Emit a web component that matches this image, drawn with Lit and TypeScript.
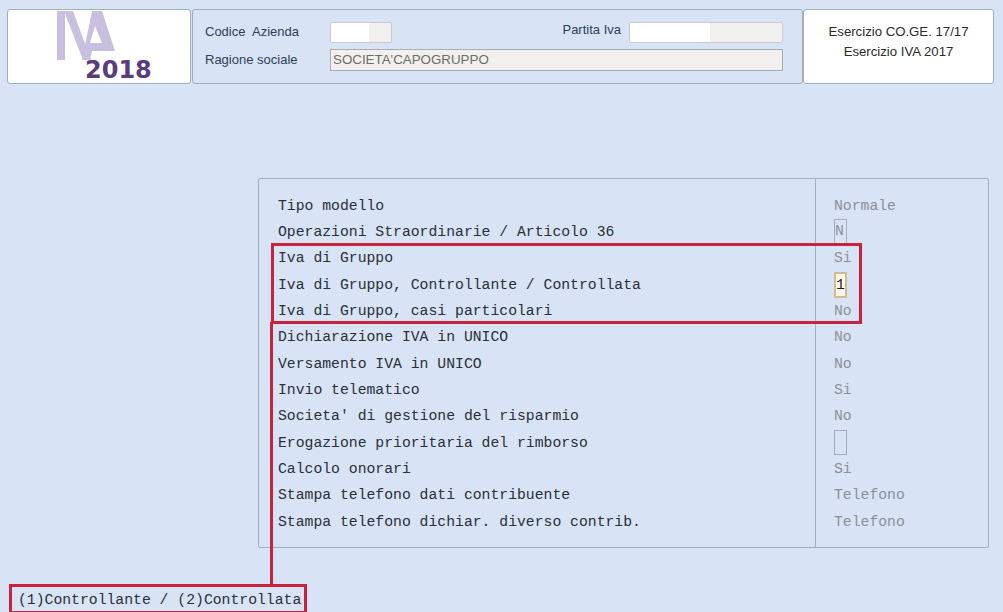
import { LitElement, html, css } from "lit";
import { customElement } from "lit/decorators.js";

type Row = { label: string; value: string; kind: "text" | "box" | "active" | "empty"; };

const ROWS: Row[] = [
  { label: "Tipo modello", value: "Normale", kind: "text" },
  { label: "Operazioni Straordinarie / Articolo 36", value: "N", kind: "box" },
  { label: "Iva di Gruppo", value: "Si", kind: "text" },
  { label: "Iva di Gruppo, Controllante / Controllata", value: "1", kind: "active" },
  { label: "Iva di Gruppo, casi particolari", value: "No", kind: "text" },
  { label: "Dichiarazione IVA in UNICO", value: "No", kind: "text" },
  { label: "Versamento IVA in UNICO", value: "No", kind: "text" },
  { label: "Invio telematico", value: "Si", kind: "text" },
  { label: "Societa' di gestione del risparmio", value: "No", kind: "text" },
  { label: "Erogazione prioritaria del rimborso", value: "", kind: "empty" },
  { label: "Calcolo onorari", value: "Si", kind: "text" },
  { label: "Stampa telefono dati contribuente", value: "Telefono", kind: "text" },
  { label: "Stampa telefono dichiar. diverso contrib.", value: "Telefono", kind: "text" },
];

@customElement("app-root")
export class AppRoot extends LitElement {
  static styles = css`
    :host {
      display: block;
      position: relative;
      width: 1003px;
      height: 612px;
      overflow: hidden;
      background: #d8e4f6;
      font-family: "Liberation Sans", Arial, sans-serif;
    }
    .page {
      display: flex;
      flex-direction: column;
      height: 100%;
      box-sizing: border-box;
      padding: 9px 9px 0 7px;
    }
    .header {
      display: grid;
      grid-template-columns: 185px 611px 191px;
      height: 75px;
    }
    .logo, .exercise, .company {
      box-sizing: border-box;
      border: 1px solid #a3aebb;
      border-radius: 3px;
      height: 75px;
    }
    .logo { background: #fff; width: 184px; }
    .logo svg { display: block; }
    .logo text {
      font-family: "DejaVu Sans", sans-serif;
      font-weight: 700;
      font-size: 24px;
      fill: #5a3d7e;
    }
    .company {
      background: #d8e4f6;
      display: grid;
      grid-template-columns: 125px 245px 54px 154px;
      grid-template-rows: 21px 22px;
      row-gap: 6px;
      padding: 12px 0 0 12px;
      font-size: 13px;
      color: #2d3f58;
      align-items: center;
    }
    .lbl { margin-bottom: 2px; white-space: nowrap; }
    .company .pi { justify-self: end; margin: 0 8px 6px 0; grid-column: 3; white-space: nowrap; }
    .field {
      box-sizing: border-box;
      height: 21px;
      background: #f1f0ee;
      border: 1px solid #c4cbd3;
      border-radius: 2px;
      overflow: hidden;
    }
    .field .mask { display: block; height: 100%; background: #fff; }
    .code { width: 62px; }
    .code .mask { width: 38px; }
    .piva { width: 154px; grid-column: 4; }
    .piva .mask { width: 80px; }
    .name {
      grid-column: 2 / 5;
      width: 453px;
      height: 22px;
      border-color: #a9acb0;
      color: #6c6c6c;
      font-size: 13.35px;
      line-height: 20px;
      padding-left: 2px;
      border-radius: 0;
    }
    .exercise {
      background: #fff;
      text-align: center;
      font-size: 13.2px;
      line-height: 20px;
      color: #2b2b2b;
      padding-top: 12px;
    }
    .panel {
      box-sizing: border-box;
      margin: 94px 0 0 251px;
      width: 731px;
      height: 370px;
      border: 1px solid #a3aebb;
      border-radius: 2px;
      display: grid;
      grid-template-columns: 557px 1fr;
      font-family: "Liberation Mono", "Courier New", monospace;
      font-size: 14.75px;
    }
    .labels {
      border-right: 1px solid #a3aebb;
      padding: 13.6px 0 0 19px;
    }
    .values { padding: 13.6px 0 0 18px; }
    .line {
      display: flow-root;
      height: 26.33px;
      line-height: 26.33px;
      white-space: pre;
      color: #2a2f38;
    }
    .values .line { color: #8b9097; }
    .box {
      box-sizing: border-box;
      display: block;
      width: 13px;
      height: 25px;
      line-height: 23px;
      border: 1px solid #a3aebb;
    }
    .box.active {
      background: #fdf8ea;
      border: 2px solid #d3bd8e;
      color: #1e1e1e;
      line-height: 22px;
      height: 26px;
      overflow: hidden;
    }
    .status {
      position: absolute;
      left: 18px;
      top: 590px;
      font-family: "Liberation Mono", "Courier New", monospace;
      font-size: 14.75px;
      line-height: 20px;
      color: #2a2f38;
      white-space: pre;
    }
    .mark { position: absolute; box-sizing: border-box; border: 3px solid #c8233c; }
    .mark.group { left: 271px; top: 243px; width: 591px; height: 81px; }
    .mark.note { left: 9px; top: 584px; width: 298px; height: 30px; }
    .mark.link { left: 270px; top: 322px; width: 3px; height: 263px; border-width: 0 0 0 3px; }
  `;

  private renderValue(r: Row) {
    if (r.kind === "text") return r.value;
    const cls = r.kind === "active" ? "box active" : "box";
    return html`<span class=${cls}>${r.value}</span>`;
  }

  render() {
    return html`
      <div class="page">
        <div class="header">
          <div class="logo">
            <svg width="182" height="73" viewBox="8 10 182 73">
              <g fill="#c8c0de">
                <polygon points="57,11 65,11 65,60 57,60" />
                <polygon points="64,11 73,11 91,60 83,60" />
                <path fill-rule="evenodd" d="M92 11H102L115 51H92L90 60H82ZM95 26L90 43H102Z" />
              </g>
              <text x="85" y="78">2018</text>
            </svg>
          </div>
          <div class="company">
            <span class="lbl">Codice&nbsp; Azienda</span>
            <div class="field code"><span class="mask"></span></div>
            <span class="pi">Partita Iva</span>
            <div class="field piva"><span class="mask"></span></div>
            <span class="lbl">Ragione sociale</span>
            <div class="field name">SOCIETA'CAPOGRUPPO</div>
          </div>
          <div class="exercise">Esercizio CO.GE. 17/17<br />Esercizio IVA 2017</div>
        </div>
        <div class="panel">
          <div class="labels">${ROWS.map((r) => html`<div class="line">${r.label}</div>`)}</div>
          <div class="values">${ROWS.map((r) => html`<div class="line">${this.renderValue(r)}</div>`)}</div>
        </div>
      </div>
      <div class="status">(1)Controllante / (2)Controllata</div>
      <div class="mark group"></div>
      <div class="mark link"></div>
      <div class="mark note"></div>
    `;
  }
}
